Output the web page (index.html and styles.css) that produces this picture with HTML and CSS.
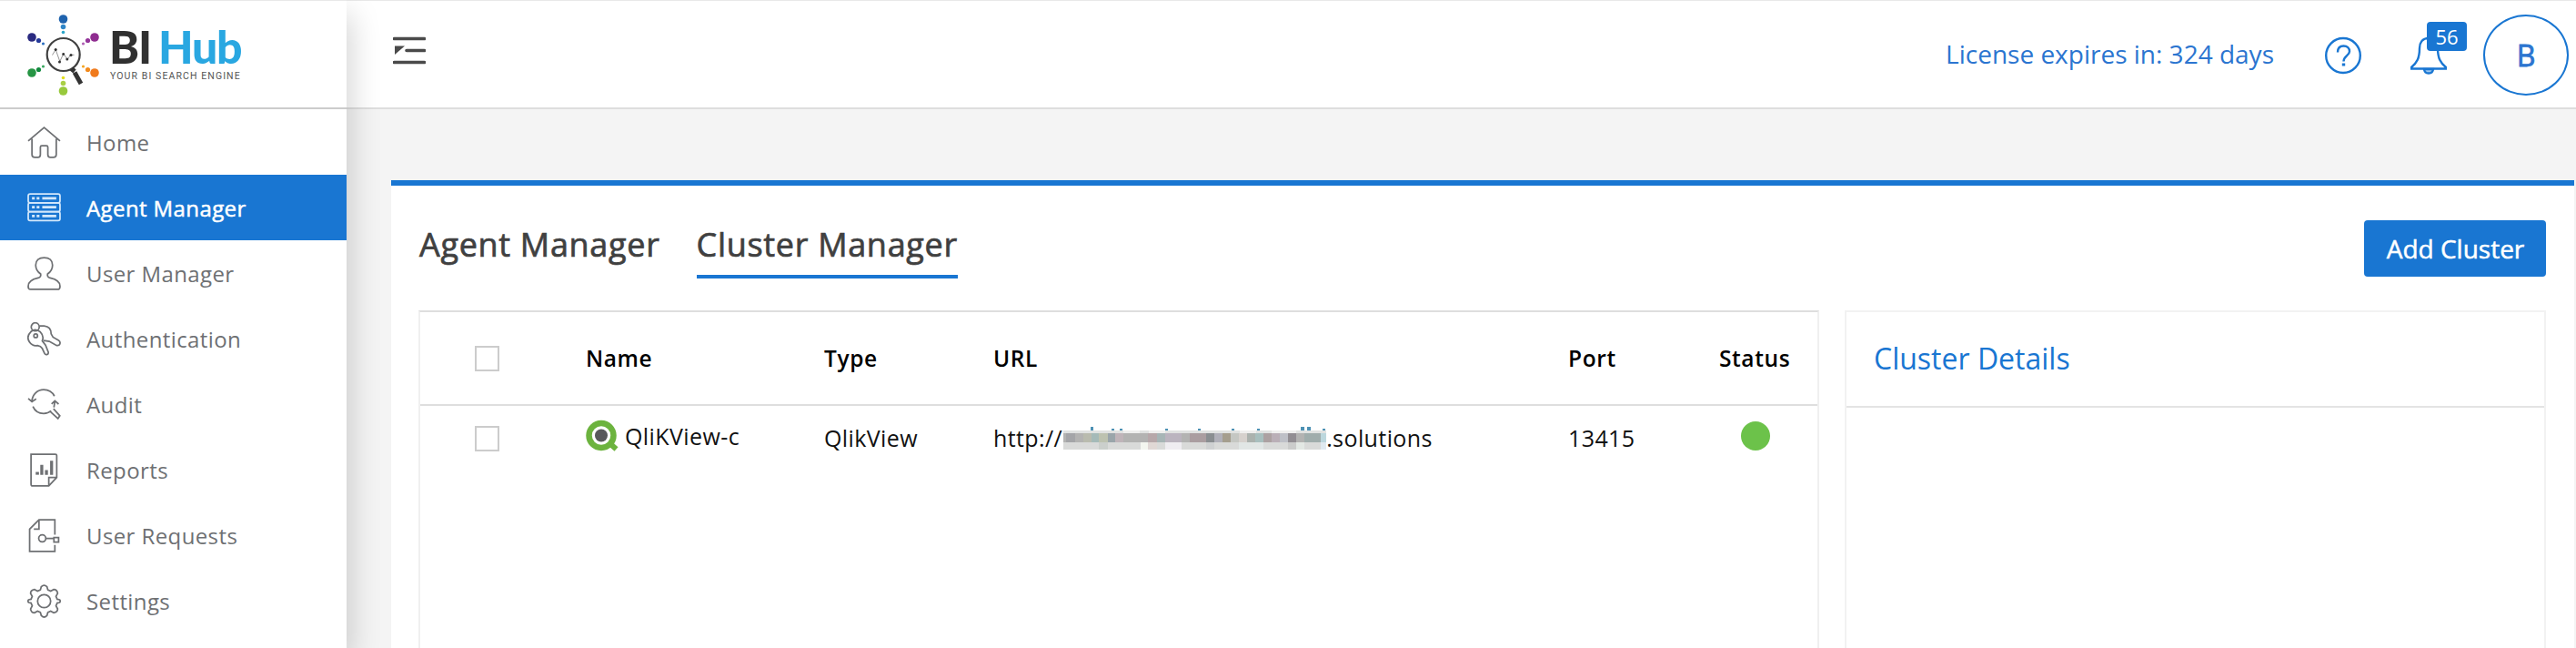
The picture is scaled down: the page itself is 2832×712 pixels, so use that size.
FILE: index.html
```html
<!DOCTYPE html>
<html lang="en">
<head>
<meta charset="utf-8">
<title>BI Hub - Cluster Manager</title>
<link rel="stylesheet" href="styles.css">
</head>
<body>
<div class="app">
  <aside class="sidebar">
    <div class="brand">
      <svg class="brand-mark" width="80" height="90" viewBox="29 15 80 90">
        <circle cx="69.500" cy="21" r="4.800" fill="#1f63ae"/><circle cx="69.500" cy="29.500" r="2.800" fill="#2f86c8"/><circle cx="69.500" cy="35.500" r="1.800" fill="#2aa5c9"/>
        <circle cx="35" cy="41" r="4.800" fill="#2a2a80"/><circle cx="42.500" cy="44.500" r="2.600" fill="#253a9a"/><circle cx="47.500" cy="48" r="1.600" fill="#2a6fc0"/>
        <circle cx="104" cy="41" r="4.800" fill="#8f2c90"/><circle cx="96.500" cy="44.500" r="2.600" fill="#94359a"/><circle cx="91.500" cy="48" r="1.600" fill="#b060b4"/>
        <circle cx="35" cy="80" r="4.800" fill="#269544"/><circle cx="42.500" cy="76.500" r="2.600" fill="#128a3e"/><circle cx="47.500" cy="73" r="1.600" fill="#3aa860"/>
        <circle cx="104" cy="80" r="4.800" fill="#f07a1c"/><circle cx="96.500" cy="76.500" r="2.600" fill="#f28a1e"/><circle cx="91.500" cy="73" r="1.600" fill="#f5a623"/>
        <circle cx="69.500" cy="100" r="4.800" fill="#98c93c"/><circle cx="69.500" cy="91.500" r="2.800" fill="#a9cf46"/><circle cx="69.500" cy="85.500" r="1.800" fill="#e3de1e"/>
        <circle cx="69.700" cy="60" r="18" fill="#fff" stroke="#404040" stroke-width="2.200"/>
        <path d="M78.500 75.500l3.500 3" stroke="#333" stroke-width="5"/><path d="M82 79.500l7 12.500" stroke="#333" stroke-width="5"/>
        <path d="M57.500 60.500l3.700-6 4.600 13 4-8.500 4.400 6.300 3.300-5h4" fill="none" stroke="#888" stroke-width=".9"/>
        <g fill="#333"><circle cx="61.200" cy="54.500" r="1.500"/><circle cx="65.500" cy="68" r="1.500"/><circle cx="69.700" cy="59.500" r="1.400"/><circle cx="73.800" cy="65" r="1.500"/><circle cx="78" cy="60.500" r="1.500"/></g>
      </svg>
      <div class="brand-words">
        <div class="brand-name"><span class="brand-bi">BI</span><span class="brand-hub">Hub</span></div>
        <div class="brand-tag">YOUR BI SEARCH ENGINE</div>
      </div>
    </div>
    <nav class="menu">
      <a class="item"><svg class="icon" viewBox="0 0 36 36"><path d="M1 16.500L18 2l17 14.500M5 14v17q0 3 3 3h3.500q2.500 0 2.500-3v-8q0-1.500 1.500-1.500h5q1.500 0 1.500 1.500v8q0 3 2.500 3H28q3 0 3-3V14"/></svg><span class="label">Home</span></a>
      <a class="item active"><svg class="icon" viewBox="0 0 36 36"><rect x="1" y="3" width="34" height="9.500" rx="2"/><rect x="1" y="12.500" width="34" height="9.500" rx="2"/><rect x="1" y="22" width="34" height="9.500" rx="2"/><path d="M5 7.700h3M10 7.700h3M16 7.700h15M5 17.200h3M10 17.200h3M16 17.200h15M5 26.700h3M10 26.700h3M16 26.700h15" stroke-width="2.600"/></svg><span class="label">Agent Manager</span></a>
      <a class="item"><svg class="icon" viewBox="0 0 36 36"><path d="M14.300 18.500C10.500 16 9 12 9 9c0-5 3.500-8 9-8s9 3 9 8c0 3-1.500 7-5.300 9.500-.5 2.500.3 3.700 2.800 4.300C32 24.500 35 27 35 31.500c0 2.500-.5 3.500-2.500 3.500h-29C1.500 35 1 34 1 31.500c0-4.500 3-7 10.500-8.700 2.500-.6 3.300-1.800 2.800-4.300z"/></svg><span class="label">User Manager</span></a>
      <a class="item"><svg class="icon" viewBox="0 0 36 36"><circle cx="8.500" cy="5" r="4.300"/><path d="M4 10c-3.500 3.500-4 8-1.500 11.500 2 3 5.500 4 8.500 3.500l3 1 2 2 2.500 5.500c1 2 4.500 1.500 4-1.500l-3-7.500-3.500-4.500c1.500-3.500.5-7-2-9.500C11 8 7 7.500 4 10zM13 4h5c5 .5 7.500 4 7.500 8.500l2 3.500 6 3.500c2.500 1.500 2 6-2 5.500l-8-4.500-6-1"/><circle cx="9" cy="14.500" r="2"/></svg><span class="label">Authentication</span></a>
      <a class="item"><svg class="icon" viewBox="0 0 36 36"><path d="M5 14C5.500 7 11 2 17.500 2c5 0 9.500 2.800 11.500 7M1 11.500l4 3.500 4.500-3M6 20c2 4.500 6.500 7.500 11.500 7.500 3 0 6-1 8-2.800M29.500 14.500l-1 6.500M26 17.500l3.500-3.500 4 3.500M28 22.500l6.800 7.500-2 3L25 26"/></svg><span class="label">Audit</span></a>
      <a class="item"><svg class="icon" viewBox="0 0 36 36"><path d="M4 1h26q1.500 0 1.500 1.500V26L23 35H6q-2 0-2-2V1zM23 35v-9h8.500"/><path d="M9 21.500h3.500" stroke-width="3"/><path d="M15.500 23V12.500M20.500 23v-5M26 23V8" stroke-width="3.200"/></svg><span class="label">Reports</span></a>
      <a class="item"><svg class="icon" viewBox="0 0 36 36"><path d="M29.500 17V1h-17L2.500 11v24h27v-7M12.500 1.500V11H7"/><circle cx="16" cy="21" r="3.800"/><path d="M20 21h8.500M28.500 20h5v5h-5z"/></svg><span class="label">User Requests</span></a>
      <a class="item"><svg class="icon" viewBox="0 0 36 36"><circle cx="18" cy="18" r="7"/><path d="M15 2.500q3-3 6 0l1 3.500 3 1.300 3.300-1.800q3.500 0 4.200 4.200L30.700 13l1.300 3 2.500.5q1.500 1.500 0 3L32 20l-1.300 3 1.800 3.300q0 3.500-4.200 4.200L25 28.700 22 30l-1 3.500q-3 3-6 0L14 30l-3-1.300-3.300 1.800q-3.500 0-4.200-4.200L5.300 23 4 20l-2.500-.5q-1.500-1.500 0-3L4 16l1.300-3-1.800-3.300q0-3.500 4.200-4.200L11 7.300 14 6z"/></svg><span class="label">Settings</span></a>
    </nav>
  </aside>
  <div class="page">
    <header class="topbar">
      <svg class="toggle" width="36" height="32" viewBox="0 0 36 32"><path d="M1.500 2.500h33M15 15.500h19.500M1.500 28.500h33" stroke="#4a4a4a" stroke-width="3.600" stroke-linecap="round"/><path d="M2 10.500h11L2 20z" fill="#4a4a4a"/></svg>
      <div class="tools">
        <span class="license">License expires in: 324 days</span>
        <svg class="help" width="40" height="42" viewBox="0 0 40 42"><ellipse cx="20" cy="21" rx="18.800" ry="19"/><path d="M14 17.500c0-4.500 2.500-7 6.500-7s6.500 2.500 6.500 6c0 4.500-6.500 5-6.500 11"/><path d="M20.500 29.500v3" stroke-width="3.400"/></svg>
        <div class="bell"><svg width="40" height="42" viewBox="0 0 40 42"><path d="M20 2C13 2 10 7 10 13c0 11-3 16-9 21v1.500h38V34c-6-5-9-10-9-21 0-6-3-11-10-11z"/><path d="M15 36c.5 6 9.500 6 10 0z" fill="#9cc7ef"/></svg><span class="count">56</span></div>
        <div class="avatar">B</div>
      </div>
    </header>
    <main class="card">
      <div class="card-head">
        <div class="tabs"><a class="tab">Agent Manager</a><a class="tab current">Cluster Manager</a></div>
        <button class="add">Add Cluster</button>
      </div>
      <div class="panels">
        <section class="grid">
          <div class="row head"><span class="box"></span><span>Name</span><span>Type</span><span>URL</span><span>Port</span><span>Status</span></div>
          <div class="row"><span class="box"></span><span class="name"><svg width="36" height="36" viewBox="0 0 36 36"><circle cx="17" cy="17.500" r="13.500" fill="none" stroke="#6cb33e" stroke-width="6.500"/><path d="M25 25l8.500 7.500" stroke="#6cb33e" stroke-width="6"/><circle cx="17" cy="17.500" r="7" fill="#58595b"/></svg><span>QliKView-c</span></span><span class="value">QlikView</span><span class="url value">http://<svg class="mask" width="289" height="25" viewBox="0 0 289 25" shape-rendering="crispEdges">
            <rect y="4" width="289" height="3" fill="#e0e2e1"/><rect y="7" width="289" height="10" fill="#b3b3b2"/><rect y="17" width="289" height="8" fill="#d9dad9"/>
            <path d="M30 0h3v4h-3zM53 2h3v2h-3zM62 2h3v2h-3zM112 2h3v2h-3zM148 2h3v2h-3zM185 2h3v2h-3zM213 2h3v2h-3zM261 0h4v4h-4zM268 0h4v4h-4zM285 2h3v2h-3z" fill="#4d91b4"/>
            <path d="M3 7h10v10H3z" fill="#a4a5a8"/><path d="M22 7h9v10h-9z" fill="#b9bbae"/><path d="M31 7h8v10h-8z" fill="#a5bab8"/><path d="M39 7h10v10H39z" fill="#bdc2b0"/><path d="M49 7h8v10h-8z" fill="#9aa5aa"/><path d="M57 7h9v10h-9z" fill="#bfb4b9"/><path d="M93 7h10v10H93z" fill="#b7a8aa"/><path d="M103 7h9v10h-9z" fill="#a7b5b6"/><path d="M112 7h18v10h-18z" fill="#bbb4bf"/><path d="M139 7h18v10h-18z" fill="#aa9da0"/><path d="M157 7h9v10h-9z" fill="#8a8e91"/><path d="M166 7h9v10h-9z" fill="#b0b0b9"/><path d="M175 7h9v10h-9z" fill="#a59e8e"/><path d="M184 7h9v10h-9z" fill="#c5c7c3"/><path d="M193 7h9v10h-9z" fill="#d6d1cd"/><path d="M202 7h9v10h-9z" fill="#abb2ae"/><path d="M211 7h9v10h-9z" fill="#a8bfbe"/><path d="M220 7h9v10h-9z" fill="#aca1a2"/><path d="M229 7h9v10h-9z" fill="#baafb7"/><path d="M238 7h9v10h-9z" fill="#bec0c7"/><path d="M247 7h9v10h-9z" fill="#928e93"/><path d="M265 7h18v10h-18z" fill="#a0adac"/><path d="M283 7h6v10h-6z" fill="#bcd7dd"/>
            <path d="M39 17h10v8H39z" fill="#cbcfcc"/><path d="M85 17h8v8h-8z" fill="#f3f6ef"/><path d="M93 17h10v8H93z" fill="#e0d8d5"/><path d="M112 17h18v8h-18z" fill="#efedf1"/><path d="M157 17h9v8h-9z" fill="#cfd1d2"/><path d="M193 17h27v8h-27z" fill="#e1e6e5"/><path d="M247 17h9v8h-9z" fill="#cbcccb"/><path d="M256 17h9v8h-9z" fill="#e3e8e4"/><path d="M283 17h6v8h-6z" fill="#dfe9ef"/><path d="M66 4h18v3H66zM94 4h18v3H94zM194 4h18v3h-18zM229 4h27v3h-27z" fill="#efefee"/>
          </svg>.solutions</span><span class="value">13415</span><span class="dot"></span></div>
        </section>
        <section class="details"><h2 class="details-title">Cluster Details</h2></section>
      </div>
    </main>
  </div>
</div>
</body>
</html>
```
FILE: styles.css
```css
* { box-sizing: border-box; }
body { margin: 0; font-family: "Open Sans", sans-serif; background: #f4f4f4; }
.app { display: flex; height: 712px; overflow: hidden; }
.sidebar { width: 381px; flex: none; background: #fff; box-shadow: 4px 16px 32px rgba(0,0,0,.18); z-index: 2; border-top: 1px solid #e8e8e8; }
.brand { height: 119px; border-bottom: 2px solid #ccc; padding: 14px 0 0 29px; display: flex; gap: 11px; }
.brand-words { padding-top: 11px; }
.brand-name { font: 900 50px/50px Lato, sans-serif; display: flex; gap: 8px; height: 50px; letter-spacing: -1.200px; }
.brand-bi { color: #303030; }
.brand-hub { color: #29a7e1; }
.brand-tag { font: 10.500px/14px Roboto, sans-serif; color: #555; letter-spacing: 1.100px; white-space: nowrap; margin: 1px 0 0 1px; }
.menu { display: flex; flex-direction: column; }
.item { height: 72px; display: flex; align-items: center; padding-left: 30px; gap: 28px; color: #6e7073; }
.icon { width: 37px; height: 37px; fill: none; stroke: #6e7073; stroke-width: 1.700; }
.label { font-size: 24px; letter-spacing: .4px; padding-top: 1px; }
.active { background: #1976d2; color: #fff; -webkit-text-stroke: .5px #fff; }
.active .icon { stroke: #d3e8fb; }
.page { flex: 1; min-width: 0; }
.topbar { height: 120px; background: #fff; border-top: 1px solid #e8e8e8; border-bottom: 2px solid #dedede; display: flex; justify-content: space-between; padding: 0 8px 0 51px; }
.toggle { margin-top: 39px; }
.tools { display: flex; align-items: center; color: #2b75d0; padding-top: 2px; }
.license { font-size: 28px; margin-top: -4px; }
.help { margin-left: 56px; fill: none; stroke: #1976d2; stroke-width: 2.400; }
.bell { position: relative; margin-left: 54px; height: 42px; }
.bell svg { fill: none; stroke: #1976d2; stroke-width: 2.400; }
.count { position: absolute; left: 18px; top: -16px; width: 44px; height: 32px; border-radius: 4px; background: #1976d2; color: #fff; font-size: 22px; line-height: 32px; text-align: center; }
.avatar { width: 94px; height: 89px; margin-left: 40px; border: 2px solid #1976d2; border-radius: 50%; display: flex; align-items: center; justify-content: center; font-size: 32px; -webkit-text-stroke: .8px; }
.card { margin: 78px 2px 0 49px; border-top: 6px solid #1976d2; background: #fff; height: 514px; padding: 38px 31px 0 30px; }
.card-head { display: flex; justify-content: space-between; align-items: flex-start; height: 99px; }
.tabs { display: flex; gap: 40px; padding-left: 1px; }
.tab { font-size: 36px; letter-spacing: .68px; line-height: 54px; height: 64px; color: #404040; -webkit-text-stroke: .7px; }
.current { border-bottom: 4px solid #1976d2; }
.add { width: 200px; height: 62px; border: 0; border-radius: 4px; background: #1976d2; color: #fff; font: 28px/62px "Open Sans", sans-serif; padding: 0 0 0 1px; -webkit-text-stroke: .5px; }
.panels { display: flex; gap: 28px; height: 400px; }
.grid { width: 1540px; border: 2px solid #f0f0f0; border-top-color: #dedede; }
.row { display: grid; grid-template-columns: 182px 262px 186px 632px 166px 1fr; align-items: center; height: 72px; color: #111; font-size: 25px; letter-spacing: .4px; }
.head { height: 103px; border-bottom: 2px solid #dedede; color: #000; font-weight: 600; font-size: 24.500px; letter-spacing: .6px; }
.box { width: 27px; height: 28px; border: 2px solid #ccc; margin-left: 60px; }
.name { display: flex; align-items: center; gap: 7px; margin-top: -6px; }
.value { margin-top: -2px; }
.url { display: flex; align-items: center; }
.mask { margin: 0 0 0 1px; }
.dot { width: 32px; height: 32px; border-radius: 50%; background: #6cc24a; margin: -6px 0 0 24px; }
.details { flex: 1; border: 2px solid #f2f2f2; }
.details-title { margin: 0; height: 105px; line-height: 102px; padding-left: 30px; border-bottom: 2px solid #e4e4e4; color: #1976d2; font-size: 32px; font-weight: 400; }
```
